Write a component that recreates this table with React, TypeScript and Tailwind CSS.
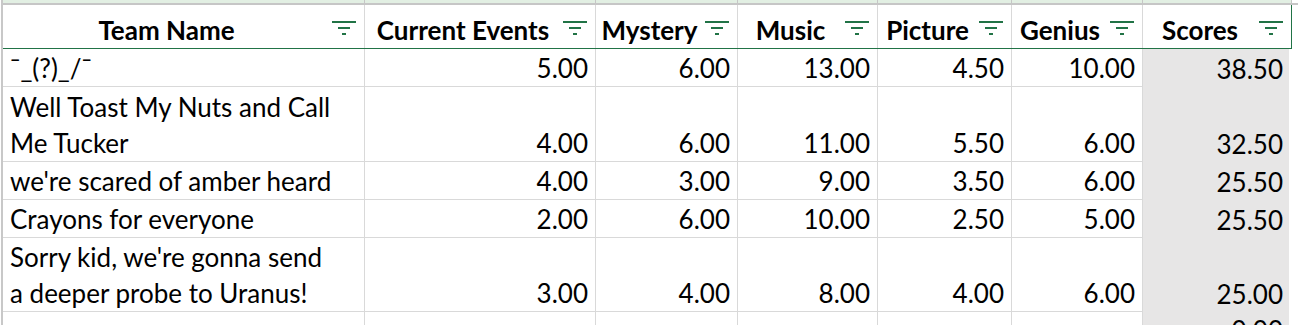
import React from "react";

// Spreadsheet column template, in px, the right border counted in each column
const GRID = "grid grid-cols-[362px_231px_142px_140px_134px_131px_149px]";

const headers = ["Team Name", "Current Events", "Mystery", "Music", "Picture", "Genius", "Scores"];

type Row = { team: string[]; values: string[]; h: string };

const rows: Row[] = [
  { team: ["¯_(?)_/¯"], values: ["5.00", "6.00", "13.00", "4.50", "10.00", "38.50"], h: "h-[38px]" },
  {
    team: ["Well Toast My Nuts and Call", "Me Tucker"],
    values: ["4.00", "6.00", "11.00", "5.50", "6.00", "32.50"],
    h: "h-[75px]",
  },
  { team: ["we're scared of amber heard"], values: ["4.00", "3.00", "9.00", "3.50", "6.00", "25.50"], h: "h-[38px]" },
  { team: ["Crayons for everyone"], values: ["2.00", "6.00", "10.00", "2.50", "5.00", "25.50"], h: "h-[38px]" },
  {
    team: ["Sorry kid, we're gonna send", "a deeper probe to Uranus!"],
    values: ["3.00", "4.00", "8.00", "4.00", "6.00", "25.00"],
    h: "h-[74px]",
  },
  { team: [""], values: ["", "", "", "", "", "0.00"], h: "h-[36px]" },
];

function FilterIcon() {
  return (
    <svg width="24" height="14" viewBox="0 0 24 14" className="block">
      <rect x="0" y="0" width="24" height="2" fill="#217346" />
      <rect x="6" y="6" width="12" height="2" fill="#217346" />
      <rect x="10" y="12" width="4" height="2" fill="#217346" />
    </svg>
  );
}

export default function App() {
  return (
    <div className="flex h-[325px] w-[1298px] overflow-hidden bg-white font-['Lato',sans-serif] text-[26px] text-black">
      <div className="w-[1px] shrink-0" />
      <div className="w-[2px] shrink-0 bg-[#c8c8c8]" />
      <div className="flex flex-1 flex-col">
        {/* column header strip, selected columns in light green */}
        <div className="flex h-[5px] border-b-2 border-[#c6c6c6]">
          <div className={GRID}>
            {headers.map((h) => (
              <div key={h} className="h-[3px] border-r border-[#c6c6c6] bg-[#e2efe3]" />
            ))}
          </div>
        </div>

        {/* table header */}
        <div className={`${GRID} self-start border-b border-[#217346]`}>
          {headers.map((h, i) => (
            <div
              key={h}
              className={`flex h-[43px] items-end ${
                i === headers.length - 1 ? "border-r border-[#217346]" : "border-r border-[#d9d9d9]"
              }`}
            >
              <span className="min-w-0 flex-1 whitespace-nowrap text-center font-bold leading-[36px]">{h}</span>
              <span className="mr-[8px] ml-[2px] self-start pt-[16px]">
                <FilterIcon />
              </span>
            </div>
          ))}
        </div>

        {/* data rows */}
        {rows.map((r, ri) => (
          <div key={ri} className={GRID}>
            <div className={`flex ${r.h} flex-col justify-end border-r border-b border-[#d9d9d9] px-[7px]`}>
              {r.team.map((line, li) => (
                <span key={li} className="whitespace-nowrap leading-[36px]">
                  {line}
                </span>
              ))}
            </div>
            {r.values.map((v, vi) =>
              vi === r.values.length - 1 ? (
                <div
                  key={vi}
                  className={`flex ${r.h} items-end justify-end border-r-[3px] border-white bg-[#e7e6e6] pr-[6px] leading-[36px]`}
                >
                  {v}
                </div>
              ) : (
                <div
                  key={vi}
                  className={`flex ${r.h} items-end justify-end border-r border-b border-[#d9d9d9] px-[7px] leading-[36px]`}
                >
                  {v}
                </div>
              )
            )}
          </div>
        ))}
      </div>
    </div>
  );
}
